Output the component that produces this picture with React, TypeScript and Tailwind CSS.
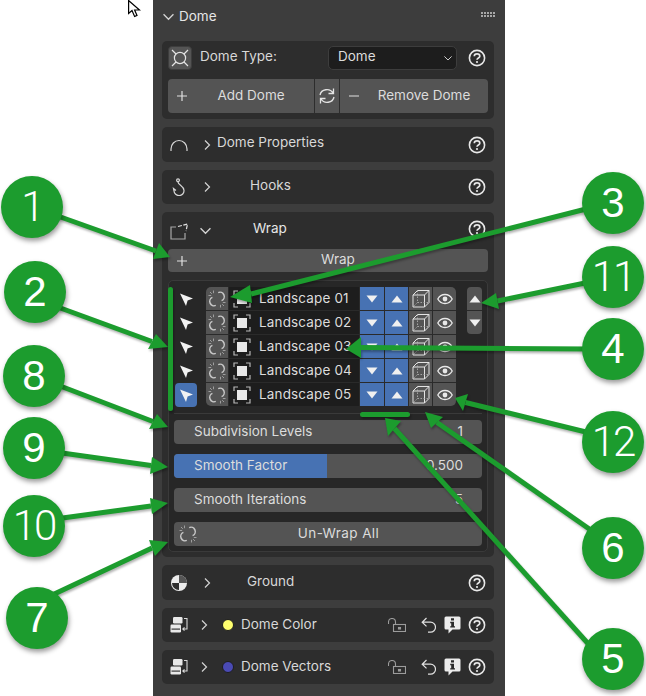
import React from "react";

const G = "#1c9c2e";

const Chevron = ({ dir = "right", size = 10, className = "" }: { dir?: "right" | "down"; size?: number; className?: string }) => (
  <svg width={size} height={size} viewBox="0 0 10 10" fill="none" stroke="#d4d4d4" strokeWidth="1.2" className={className}>
    {dir === "right" ? <path d="M3 0.5 L7.5 5 L3 9.5" /> : <path d="M0.5 3 L5 7.5 L9.5 3" />}
  </svg>
);

const Help = () => (
  <svg width="18" height="18" viewBox="0 0 18 18" fill="none" className="shrink-0">
    <circle cx="9" cy="9" r="7.6" stroke="#e8e8e8" strokeWidth="1.6" />
    <path d="M6.3 7.2 C6.3 4.2 11.8 4.2 11.8 7.2 C11.8 9 9 8.9 9 10.8" stroke="#e8e8e8" strokeWidth="1.7" />
    <circle cx="9" cy="13" r="1.1" fill="#e8e8e8" />
  </svg>
);

const Plus = () => (
  <svg width="12" height="12" viewBox="0 0 12 12" stroke="#e0e0e0" strokeWidth="1.2" className="shrink-0">
    <path d="M6 1 V11 M1 6 H11" />
  </svg>
);

const Unlink = () => (
  <svg width="20" height="20" viewBox="0 0 20 20" fill="none" stroke="#c8c8c8" strokeWidth="1.5" className="shrink-0">
    <path d="M11.2 3.6 A4.2 4.2 0 1 1 14.6 11.6" />
    <path d="M8.8 16.4 A4.2 4.2 0 1 1 5.4 8.4" />
    <path d="M6.5 1.5 V4.2 M1.5 6.5 H4.2 M3 3 L4.8 4.8 M13.5 18.5 V15.8 M18.5 13.5 H15.8 M17 17 L15.2 15.2" strokeWidth="0.9" stroke="#a8a8a8" />
  </svg>
);

const RestrictIcon = () => (
  <svg width="18" height="18" viewBox="0 0 18 18" fill="none" className="shrink-0">
    <rect x="4" y="4" width="10" height="10" fill="#e8e8e8" />
    <path d="M1 5 V1 H5 M13 1 H17 V5 M17 13 V17 H13 M5 17 H1 V13" stroke="#b8b8b8" strokeWidth="1.2" />
  </svg>
);

const Cube = () => (
  <svg width="20" height="20" viewBox="0 0 20 20" fill="none" stroke="#e4e4e4" strokeWidth="1" className="shrink-0">
    <path d="M2 6 L6.5 1.5 H18 V13.5 L13.5 18 H2 Z M2 6 H13.5 V18 M13.5 6 L18 1.5" />
    <path d="M6.5 1.5 V13.5 H18 M6.5 13.5 L2 18" strokeDasharray="1.5 1.5" strokeWidth="0.8" stroke="#b8b8b8" />
  </svg>
);

const Eye = () => (
  <svg width="16" height="12" viewBox="0 0 16 12" fill="none" className="shrink-0">
    <path d="M0.8 6 C4 0 12 0 15.2 6 C12 12 4 12 0.8 6 Z" stroke="#e8e8e8" strokeWidth="1.3" />
    <circle cx="8" cy="6" r="2.4" fill="#e8e8e8" />
  </svg>
);

const Tri = ({ up = false }: { up?: boolean }) => (
  <svg width="12" height="8" viewBox="0 0 12 8" fill="#f0f0f0" className="shrink-0">
    {up ? <path d="M6 0.5 L11.5 7.5 H0.5 Z" /> : <path d="M0.5 0.5 H11.5 L6 7.5 Z" />}
  </svg>
);

const Pointer = () => (
  <svg width="22" height="24" viewBox="0 0 22 24" fill="#f2f2f2" className="shrink-0">
    <path d="M5 6.5 L18 11.5 L12.6 13.6 L11 19 Z" />
  </svg>
);

const Preset = () => (
  <svg width="18" height="18" viewBox="0 0 18 18" fill="none" className="shrink-0">
    <rect x="3" y="1" width="9.5" height="6.5" rx="1.2" fill="#e8e8e8" />
    <rect x="0.5" y="8.5" width="10.5" height="8" rx="1.2" fill="#e8e8e8" />
    <rect x="1.5" y="12.5" width="8.5" height="1.2" fill="#3a3a3a" />
    <path d="M14 2.5 H17 V13 H13 M14.5 11.4 L12.8 13 L14.5 14.6" stroke="#d8d8d8" strokeWidth="1.1" />
  </svg>
);

const Lock = () => (
  <svg width="18" height="14" viewBox="0 0 18 14" fill="none" stroke="#9c9c9c" strokeWidth="1.1" className="shrink-0">
    <path d="M0.5 6 V4 A3.5 3.5 0 0 1 7.5 4 V6" />
    <rect x="5.5" y="6.5" width="12" height="7" />
    <rect x="10.5" y="9.5" width="2" height="1.5" fill="#9c9c9c" />
  </svg>
);

const Undo = () => (
  <svg width="15" height="16" viewBox="0 0 15 16" fill="none" stroke="#e0e0e0" strokeWidth="1.2" className="shrink-0">
    <path d="M5.5 1 L1.2 5.2 L5.5 9.4 M1.2 5.2 H9.5 A5 5 0 0 1 9.5 15.2 H7" />
  </svg>
);

const Info = () => (
  <svg width="17" height="18" viewBox="0 0 17 18" className="shrink-0">
    <path d="M2 0.5 H15 A1.5 1.5 0 0 1 16.5 2 V12 A1.5 1.5 0 0 1 15 13.5 H8.5 L4.5 17.5 V13.5 H2 A1.5 1.5 0 0 1 0.5 12 V2 A1.5 1.5 0 0 1 2 0.5 Z" fill="#ececec" />
    <path d="M7 2.2 H10 V4.6 H7 Z M6.2 5.8 H10 V10.2 H11 V11.6 H6.2 V10.2 H7.2 V7.2 H6.2 Z" fill="#2b2b2b" />
  </svg>
);

const Row = ({ icon, h, label, labelClass }: { icon: React.ReactNode; h: string; label: string; labelClass: string }) => (
  <div className={`flex ${h} items-center rounded-[5px] bg-[#2d2d2d] pr-[8px]`}>
    <div className="flex w-[34px] justify-center">{icon}</div>
    <Chevron className="ml-[6px]" />
    <span className={labelClass}>{label}</span>
    <div className="ml-auto"><Help /></div>
  </div>
);

const PropRow = ({ dot, label }: { dot: string; label: string }) => (
  <div className="flex h-[34px] items-center rounded-[5px] bg-[#2d2d2d] pr-[8px]">
    <div className="flex w-[34px] justify-center"><Preset /></div>
    <Chevron className="ml-[3px]" />
    <span className="ml-[13px] h-[12px] w-[12px] rounded-full border border-[#1d1d1d]" style={{ backgroundColor: dot }} />
    <span className="ml-[7px] text-[#d8d8d8]">{label}</span>
    <div className="ml-auto flex items-center">
      <Lock />
      <div className="ml-[15px]"><Undo /></div>
      <div className="ml-[8px]"><Info /></div>
      <div className="ml-[7px]"><Help /></div>
    </div>
  </div>
);

const names = ["Landscape 01", "Landscape 02", "Landscape 03", "Landscape 04", "Landscape 05"];

const Slider = ({ label, value, fill }: { label: string; value: string; fill?: boolean }) => (
  <div className="relative flex h-[24px] items-center justify-between overflow-hidden rounded-[4px] bg-[#545454] pl-[20px] pr-[19px] text-[#dcdcdc]">
    {fill && <div className="absolute inset-y-0 left-0 w-[153px] bg-[#4772b3]" />}
    <span className="relative">{label}</span>
    <span className="relative">{value}</span>
  </div>
);

const circles = [
  { n: "1", x: 32, y: 207 },
  { n: "2", x: 35, y: 292 },
  { n: "8", x: 34, y: 376 },
  { n: "9", x: 34, y: 448 },
  { n: "10", x: 34, y: 526 },
  { n: "7", x: 37, y: 618 },
  { n: "3", x: 613, y: 203 },
  { n: "11", x: 613, y: 277 },
  { n: "4", x: 613, y: 349 },
  { n: "12", x: 613, y: 442 },
  { n: "6", x: 613, y: 548 },
  { n: "5", x: 613, y: 659 },
];

const arrows: { from: [number, number]; tip: [number, number]; a: [number, number]; b: [number, number] }[] = [
  { from: [55, 215], tip: [170, 257], a: [159, 243], b: [153, 259] },
  { from: [55, 306], tip: [168, 347], a: [156, 334], b: [148, 349] },
  { from: [55, 384], tip: [168, 427], a: [157, 414], b: [149, 429] },
  { from: [55, 452], tip: [168, 467], a: [152, 457], b: [150, 474] },
  { from: [55, 519], tip: [168, 503], a: [150, 498], b: [152, 514] },
  { from: [50, 596], tip: [168, 542], a: [149, 540], b: [155, 556] },
  { from: [590, 208], tip: [230, 297], a: [250, 285], b: [252, 303] },
  { from: [590, 282], tip: [481, 303], a: [496, 293], b: [499, 309] },
  { from: [590, 349], tip: [346, 349], a: [361, 337], b: [361, 358] },
  { from: [590, 433], tip: [455, 398], a: [468, 394], b: [463, 411] },
  { from: [595, 533], tip: [425, 412], a: [443, 417], b: [431, 428] },
  { from: [592, 648], tip: [385, 418], a: [401, 421], b: [388, 436] },
];

export default function App() {
  return (
    <div className="relative h-[696px] w-[646px] overflow-hidden bg-white font-['Inter',sans-serif] text-[13.5px] leading-none">
      {/* Panel */}
      <div className="ml-[153px] flex h-[696px] w-[352px] flex-col bg-[#3d3d3d] pl-[9px] pr-[11px]">
        <div className="relative flex h-[41px] shrink-0 items-start pt-[9px]">
          <div className="flex h-[14px] items-center pl-[1px]"><Chevron dir="down" size={11} /></div>
          <span className="relative top-[1px] ml-[5px] h-[14px] text-[#e6e6e6]">Dome</span>
          <svg width="15" height="6" viewBox="0 0 15 6" fill="#a8a8a8" className="ml-auto mr-[-2px] mt-[3px]">
            <path d="M0 0h2v2H0zM3 0h2v2H3zM6 0h2v2H6zM9 0h2v2H9zM12 0h2v2h-2zM0 3h2v2H0zM3 3h2v2H3zM6 3h2v2H6zM9 3h2v2H9zM12 3h2v2h-2z" />
          </svg>
        </div>

        <div className="flex flex-col gap-[8px]">
          {/* Dome type */}
          <div className="h-[78px] rounded-[5px] bg-[#2d2d2d] px-[6px] pt-[5px]">
            <div className="flex h-[24px] items-center">
              <div className="flex h-[24px] w-[24px] items-center justify-center rounded-[4px] border border-[#3d3d3d] bg-[#545454]">
                <svg width="18" height="18" viewBox="0 0 18 18" fill="none" stroke="#e4e4e4" strokeWidth="1.2">
                  <circle cx="9" cy="9" r="5.6" />
                  <path d="M1 1 L5 5 M17 1 L13 5 M1 17 L5 13 M17 17 L13 13" />
                </svg>
              </div>
              <span className="relative -top-[1px] ml-[8px] text-[#d8d8d8]">Dome Type:</span>
              <div className="ml-auto flex h-[24px] w-[129px] items-center justify-between rounded-[5px] border border-[#3d3d3d] bg-[#1d1d1d] pl-[9px] pr-[4px] text-[#dcdcdc]">
                <span className="relative -top-[1px]">Dome</span>
                <Chevron dir="down" size={8} />
              </div>
              <div className="ml-[11px] mr-[2px]"><Help /></div>
            </div>
            <div className="mt-[9px] flex h-[34px] gap-[1px] overflow-hidden rounded-[4px] text-[#dcdcdc]">
              <div className="flex w-[146px] items-center bg-[#545454] pl-[8px]">
                <Plus />
                <span className="flex-1 text-center">Add Dome</span>
              </div>
              <div className="flex w-[24px] items-center justify-center bg-[#545454]">
                <svg width="18" height="18" viewBox="0 0 18 18" fill="none" stroke="#e4e4e4" strokeWidth="1.3">
                  <path d="M2 8 A7 6.5 0 0 1 15 6 M15.5 1.5 V6.5 H10.5 M16 10 A7 6.5 0 0 1 3 12 M2.5 16.5 V11.5 H7.5" />
                </svg>
              </div>
              <div className="flex flex-1 items-center bg-[#545454] pl-[8px]">
                <svg width="12" height="12" viewBox="0 0 12 12" stroke="#e0e0e0" strokeWidth="1.2"><path d="M1 6 H11" /></svg>
                <span className="flex-1 text-center">Remove Dome</span>
              </div>
            </div>
          </div>

          <Row
            h="h-[35px]"
            icon={<svg width="18" height="12" viewBox="0 0 18 12" fill="none" stroke="#d8d8d8" strokeWidth="1.2"><path d="M1 12 V10 A8 8.5 0 0 1 17 10 V12" /></svg>}
            label="Dome Properties"
            labelClass="relative -top-[2px] ml-[5px] text-[#d8d8d8]"
          />
          <Row
            h="h-[34px]"
            icon={<svg width="14" height="18" viewBox="0 0 14 18" fill="none" stroke="#d8d8d8" strokeWidth="1.2"><circle cx="6" cy="2.2" r="1.4" /><path d="M6 4 C6 7 12 8 12 12.5 A5 4.8 0 0 1 2 13 L1.5 10.5 L4 12.5" /></svg>}
            label="Hooks"
            labelClass="relative -top-[1px] ml-[38px] text-[#d8d8d8]"
          />

          {/* Wrap */}
          <div className="h-[345px] rounded-[5px] bg-[#2d2d2d] px-[6px]">
            <div className="flex h-[37px] items-center pb-[4px] pr-[2px]">
              <div className="mt-[5px] flex w-[22px] justify-center">
                <svg width="19" height="17" viewBox="0 0 19 17" fill="none" stroke="#a8a8a8" strokeWidth="1.2">
                  <path d="M6 4 H1 V16 H15 V10" />
                  <path d="M8 3.5 L17.5 1 L16 8" stroke="#e0e0e0" strokeDasharray="4 1.5" />
                </svg>
              </div>
              <Chevron dir="down" size={11} className="ml-[10px] mt-[3px]" />
              <span className="ml-[42px] text-[#e6e6e6]">Wrap</span>
              <div className="ml-auto mt-[1px]"><Help /></div>
            </div>
            <div className="flex h-[23px] items-center rounded-[4px] bg-[#545454] pl-[8px] text-[#dcdcdc]">
              <Plus />
              <span className="relative -top-[1px] flex-1 text-center">Wrap</span>
            </div>

            <div className="mt-[8px] h-[272px] rounded-[5px] border border-[#3a3a3a] bg-[#272727] px-[5px] pt-[6px]">
              <div className="flex items-start">
                <div className="ml-[1px] flex w-[22px] flex-col">
                  {names.map((n, i) => (
                    <div key={n} className={`flex h-[24px] items-center justify-center ${i === 4 ? "rounded-[4px] bg-[#4772b3]" : ""}`}>
                      <Pointer />
                    </div>
                  ))}
                </div>
                <div className="ml-[9px] flex w-[250px] flex-col gap-[1px] overflow-hidden rounded-[5px] bg-[#2a2a2a]">
                  {names.map((n) => (
                    <div key={n} className="flex h-[23px] gap-[1px]">
                      <div className="flex w-[22px] items-center justify-center bg-[#545454]"><Unlink /></div>
                      <div className="flex w-[130px] items-center bg-[#1d1d1d] pl-[4px] text-[#dcdcdc]">
                        <RestrictIcon />
                        <span className="ml-[8px] tracking-[0.15px]">{n}</span>
                      </div>
                      <div className="flex w-[24px] items-center justify-center bg-[#4772b3]"><Tri /></div>
                      <div className="flex w-[23px] items-center justify-center bg-[#4772b3]"><Tri up /></div>
                      <div className="flex w-[23px] items-center justify-center bg-[#545454]"><Cube /></div>
                      <div className="flex flex-1 items-center justify-center bg-[#545454]"><Eye /></div>
                    </div>
                  ))}
                </div>
                <div className="ml-[11px] flex h-[47px] w-[15px] flex-col gap-[1px] overflow-hidden rounded-[4px] bg-[#2a2a2a]">
                  <div className="flex flex-1 items-center justify-center bg-[#545454]"><Tri up /></div>
                  <div className="flex flex-1 items-center justify-center bg-[#545454]"><Tri /></div>
                </div>
              </div>
              <div className="mt-[6px] h-px bg-[#3a3a3a]" />
              <div className="mt-[6px] flex flex-col gap-[10px]">
                <Slider label="Subdivision Levels" value="1" />
                <Slider label="Smooth Factor" value="0.500" fill />
                <Slider label="Smooth Iterations" value="5" />
                <div className="flex h-[24px] items-center rounded-[4px] bg-[#545454] pl-[4px] pr-[3px] text-[#dcdcdc]">
                  <Unlink />
                  <span className="flex-1 text-center tracking-[0.4px]">Un-Wrap All</span>
                </div>
              </div>
            </div>
          </div>

          <Row
            h="h-[35px]"
            icon={
              <svg width="18" height="18" viewBox="0 0 18 18">
                <circle cx="9" cy="9" r="8" fill="#ececec" />
                <path d="M9 2 A7 7 0 0 1 16 9 H9 Z M9 16 A7 7 0 0 1 2 9 H9 Z" fill="#2d2d2d" />
                <path d="M9 9 H17 A8 8 0 0 0 9 1 Z" fill="#555" />
              </svg>
            }
            label="Ground"
            labelClass="relative -top-[1px] ml-[35px] text-[#d8d8d8]"
          />
          <PropRow dot="#ffff6e" label="Dome Color" />
          <PropRow dot="#4a4ab4" label="Dome Vectors" />
        </div>
      </div>

      {/* Mouse cursor */}
      <svg width="13" height="18" viewBox="0 0 13 18" className="absolute left-[128px] top-0" fill="#fff" stroke="#000" strokeWidth="1.2">
        <path d="M0.6 0.5 V13.5 L4 10.6 L6.6 16.5 L9 15.4 L6.6 10 H11.5 Z" />
      </svg>

      {/* Annotation arrows */}
      <svg width="646" height="696" viewBox="0 0 646 696" className="absolute left-0 top-0 drop-shadow-[1px_2px_1px_rgba(0,0,0,0.3)]">
        <rect x="168" y="287" width="5" height="124" rx="2.5" fill={G} />
        <rect x="360" y="412" width="50" height="5" rx="2.5" fill={G} />
        {arrows.map((a, i) => (
          <g key={i}>
            <line x1={a.from[0]} y1={a.from[1]} x2={(a.a[0] + a.b[0]) / 2} y2={(a.a[1] + a.b[1]) / 2} stroke={G} strokeWidth="5" />
            <polygon points={`${a.tip[0]},${a.tip[1]} ${a.a[0]},${a.a[1]} ${a.b[0]},${a.b[1]}`} fill={G} />
          </g>
        ))}
      </svg>

      {/* Annotation badges */}
      {circles.map((c) => (
        <div
          key={c.n}
          className={`absolute flex h-[62px] w-[62px] items-center justify-center rounded-full bg-[#1c9c2e] text-[42px] leading-none text-white shadow-[1px_3px_5px_rgba(0,0,0,0.4)] ${c.n.includes("1") ? "font-['Roboto',sans-serif] font-light tracking-[-2px]" : "font-['Liberation_Sans',sans-serif]"}`}
          style={{ left: c.x - 31, top: c.y - 31 }}
        >
          {c.n}
        </div>
      ))}
    </div>
  );
}
